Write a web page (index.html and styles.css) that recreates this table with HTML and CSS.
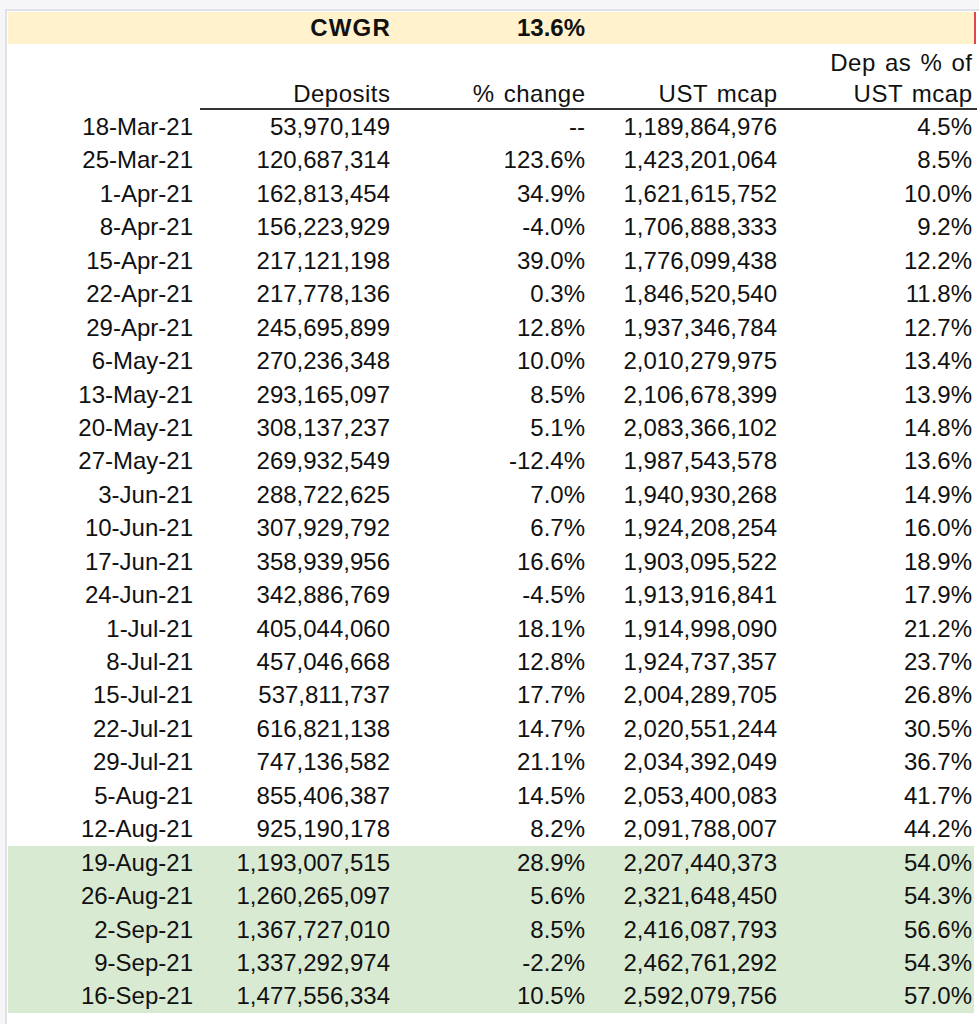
FILE: index.html
```html
<!DOCTYPE html>
<html>
<head>
<meta charset="utf-8">
<link rel="stylesheet" href="styles.css">
</head>
<body>
<div class="sheet">
  <div class="band">
    <div class="cell"></div>
    <div class="cell b wide">CWGR</div>
    <div class="cell b">13.6%</div>
    <div class="cell"></div>
    <div class="cell"></div>
  </div>
  <div class="head">
    <div class="cell"></div>
    <div class="cell">Deposits</div>
    <div class="cell">% change</div>
    <div class="cell">UST mcap</div>
    <div class="cell last">Dep as % of<br>UST mcap</div>
  </div>
  <div class="rule"></div>
  <div class="rows">
    <div class="row"><div class="cell">18-Mar-21</div><div class="cell">53,970,149</div><div class="cell">--</div><div class="cell">1,189,864,976</div><div class="cell last">4.5%</div></div>
    <div class="row"><div class="cell">25-Mar-21</div><div class="cell">120,687,314</div><div class="cell">123.6%</div><div class="cell">1,423,201,064</div><div class="cell last">8.5%</div></div>
    <div class="row"><div class="cell">1-Apr-21</div><div class="cell">162,813,454</div><div class="cell">34.9%</div><div class="cell">1,621,615,752</div><div class="cell last">10.0%</div></div>
    <div class="row"><div class="cell">8-Apr-21</div><div class="cell">156,223,929</div><div class="cell">-4.0%</div><div class="cell">1,706,888,333</div><div class="cell last">9.2%</div></div>
    <div class="row"><div class="cell">15-Apr-21</div><div class="cell">217,121,198</div><div class="cell">39.0%</div><div class="cell">1,776,099,438</div><div class="cell last">12.2%</div></div>
    <div class="row"><div class="cell">22-Apr-21</div><div class="cell">217,778,136</div><div class="cell">0.3%</div><div class="cell">1,846,520,540</div><div class="cell last">11.8%</div></div>
    <div class="row"><div class="cell">29-Apr-21</div><div class="cell">245,695,899</div><div class="cell">12.8%</div><div class="cell">1,937,346,784</div><div class="cell last">12.7%</div></div>
    <div class="row"><div class="cell">6-May-21</div><div class="cell">270,236,348</div><div class="cell">10.0%</div><div class="cell">2,010,279,975</div><div class="cell last">13.4%</div></div>
    <div class="row"><div class="cell">13-May-21</div><div class="cell">293,165,097</div><div class="cell">8.5%</div><div class="cell">2,106,678,399</div><div class="cell last">13.9%</div></div>
    <div class="row"><div class="cell">20-May-21</div><div class="cell">308,137,237</div><div class="cell">5.1%</div><div class="cell">2,083,366,102</div><div class="cell last">14.8%</div></div>
    <div class="row"><div class="cell">27-May-21</div><div class="cell">269,932,549</div><div class="cell">-12.4%</div><div class="cell">1,987,543,578</div><div class="cell last">13.6%</div></div>
    <div class="row"><div class="cell">3-Jun-21</div><div class="cell">288,722,625</div><div class="cell">7.0%</div><div class="cell">1,940,930,268</div><div class="cell last">14.9%</div></div>
    <div class="row"><div class="cell">10-Jun-21</div><div class="cell">307,929,792</div><div class="cell">6.7%</div><div class="cell">1,924,208,254</div><div class="cell last">16.0%</div></div>
    <div class="row"><div class="cell">17-Jun-21</div><div class="cell">358,939,956</div><div class="cell">16.6%</div><div class="cell">1,903,095,522</div><div class="cell last">18.9%</div></div>
    <div class="row"><div class="cell">24-Jun-21</div><div class="cell">342,886,769</div><div class="cell">-4.5%</div><div class="cell">1,913,916,841</div><div class="cell last">17.9%</div></div>
    <div class="row"><div class="cell">1-Jul-21</div><div class="cell">405,044,060</div><div class="cell">18.1%</div><div class="cell">1,914,998,090</div><div class="cell last">21.2%</div></div>
    <div class="row"><div class="cell">8-Jul-21</div><div class="cell">457,046,668</div><div class="cell">12.8%</div><div class="cell">1,924,737,357</div><div class="cell last">23.7%</div></div>
    <div class="row"><div class="cell">15-Jul-21</div><div class="cell">537,811,737</div><div class="cell">17.7%</div><div class="cell">2,004,289,705</div><div class="cell last">26.8%</div></div>
    <div class="row"><div class="cell">22-Jul-21</div><div class="cell">616,821,138</div><div class="cell">14.7%</div><div class="cell">2,020,551,244</div><div class="cell last">30.5%</div></div>
    <div class="row"><div class="cell">29-Jul-21</div><div class="cell">747,136,582</div><div class="cell">21.1%</div><div class="cell">2,034,392,049</div><div class="cell last">36.7%</div></div>
    <div class="row"><div class="cell">5-Aug-21</div><div class="cell">855,406,387</div><div class="cell">14.5%</div><div class="cell">2,053,400,083</div><div class="cell last">41.7%</div></div>
    <div class="row"><div class="cell">12-Aug-21</div><div class="cell">925,190,178</div><div class="cell">8.2%</div><div class="cell">2,091,788,007</div><div class="cell last">44.2%</div></div>
    <div class="row hl"><div class="cell">19-Aug-21</div><div class="cell">1,193,007,515</div><div class="cell">28.9%</div><div class="cell">2,207,440,373</div><div class="cell last">54.0%</div></div>
    <div class="row hl"><div class="cell">26-Aug-21</div><div class="cell">1,260,265,097</div><div class="cell">5.6%</div><div class="cell">2,321,648,450</div><div class="cell last">54.3%</div></div>
    <div class="row hl"><div class="cell">2-Sep-21</div><div class="cell">1,367,727,010</div><div class="cell">8.5%</div><div class="cell">2,416,087,793</div><div class="cell last">56.6%</div></div>
    <div class="row hl"><div class="cell">9-Sep-21</div><div class="cell">1,337,292,974</div><div class="cell">-2.2%</div><div class="cell">2,462,761,292</div><div class="cell last">54.3%</div></div>
    <div class="row hl"><div class="cell">16-Sep-21</div><div class="cell">1,477,556,334</div><div class="cell">10.5%</div><div class="cell">2,592,079,756</div><div class="cell last">57.0%</div></div>
  </div>
</div>
</body>
</html>
```
FILE: styles.css
```css
html, body {
  margin: 0;
  padding: 0;
  background: #f6f6f8;
}
body {
  font-family: "Liberation Sans", Arial, sans-serif;
  font-size: 24px;
  color: #111;
  overflow: hidden;
}
.sheet {
  margin: 9px 0 0 5px;
  border-top: 2px solid #e1e1ea;
  border-left: 2px solid #e1e1ea;
  background: #fff;
  padding: 1px 0 0 1px;
  min-height: 1020px;
  box-sizing: border-box;
}
.band, .head, .row {
  display: grid;
  grid-template-columns: 192px 197px 195px 192px 190px;
  width: 966px;
}
.cell {
  text-align: right;
  padding-right: 7px;
  white-space: nowrap;
}
.cell.last {
  padding-right: 2px;
}
.band {
  height: 32px;
  line-height: 32px;
  background: #fff2cc;
  border-right: 2px solid #e0464b;
}
.b {
  font-weight: bold;
}
.wide {
  letter-spacing: 1.2px;
}
.band .wide {
  padding-right: 6px;
}
.head {
  height: 65px;
  align-items: end;
  line-height: 30.5px;
  letter-spacing: 0.5px;
  word-spacing: 2px;
}
.head .cell {
  padding-right: 6.5px;
}
.head .cell.last {
  padding-right: 1.5px;
}
.rule {
  margin-top: -1px;
  margin-left: 192px;
  width: 777px;
  height: 2px;
  background: #333;
}
.row {
  height: 33.45px;
  line-height: 33.45px;
}
.row.hl {
  background: #d9ead3;
}
```
